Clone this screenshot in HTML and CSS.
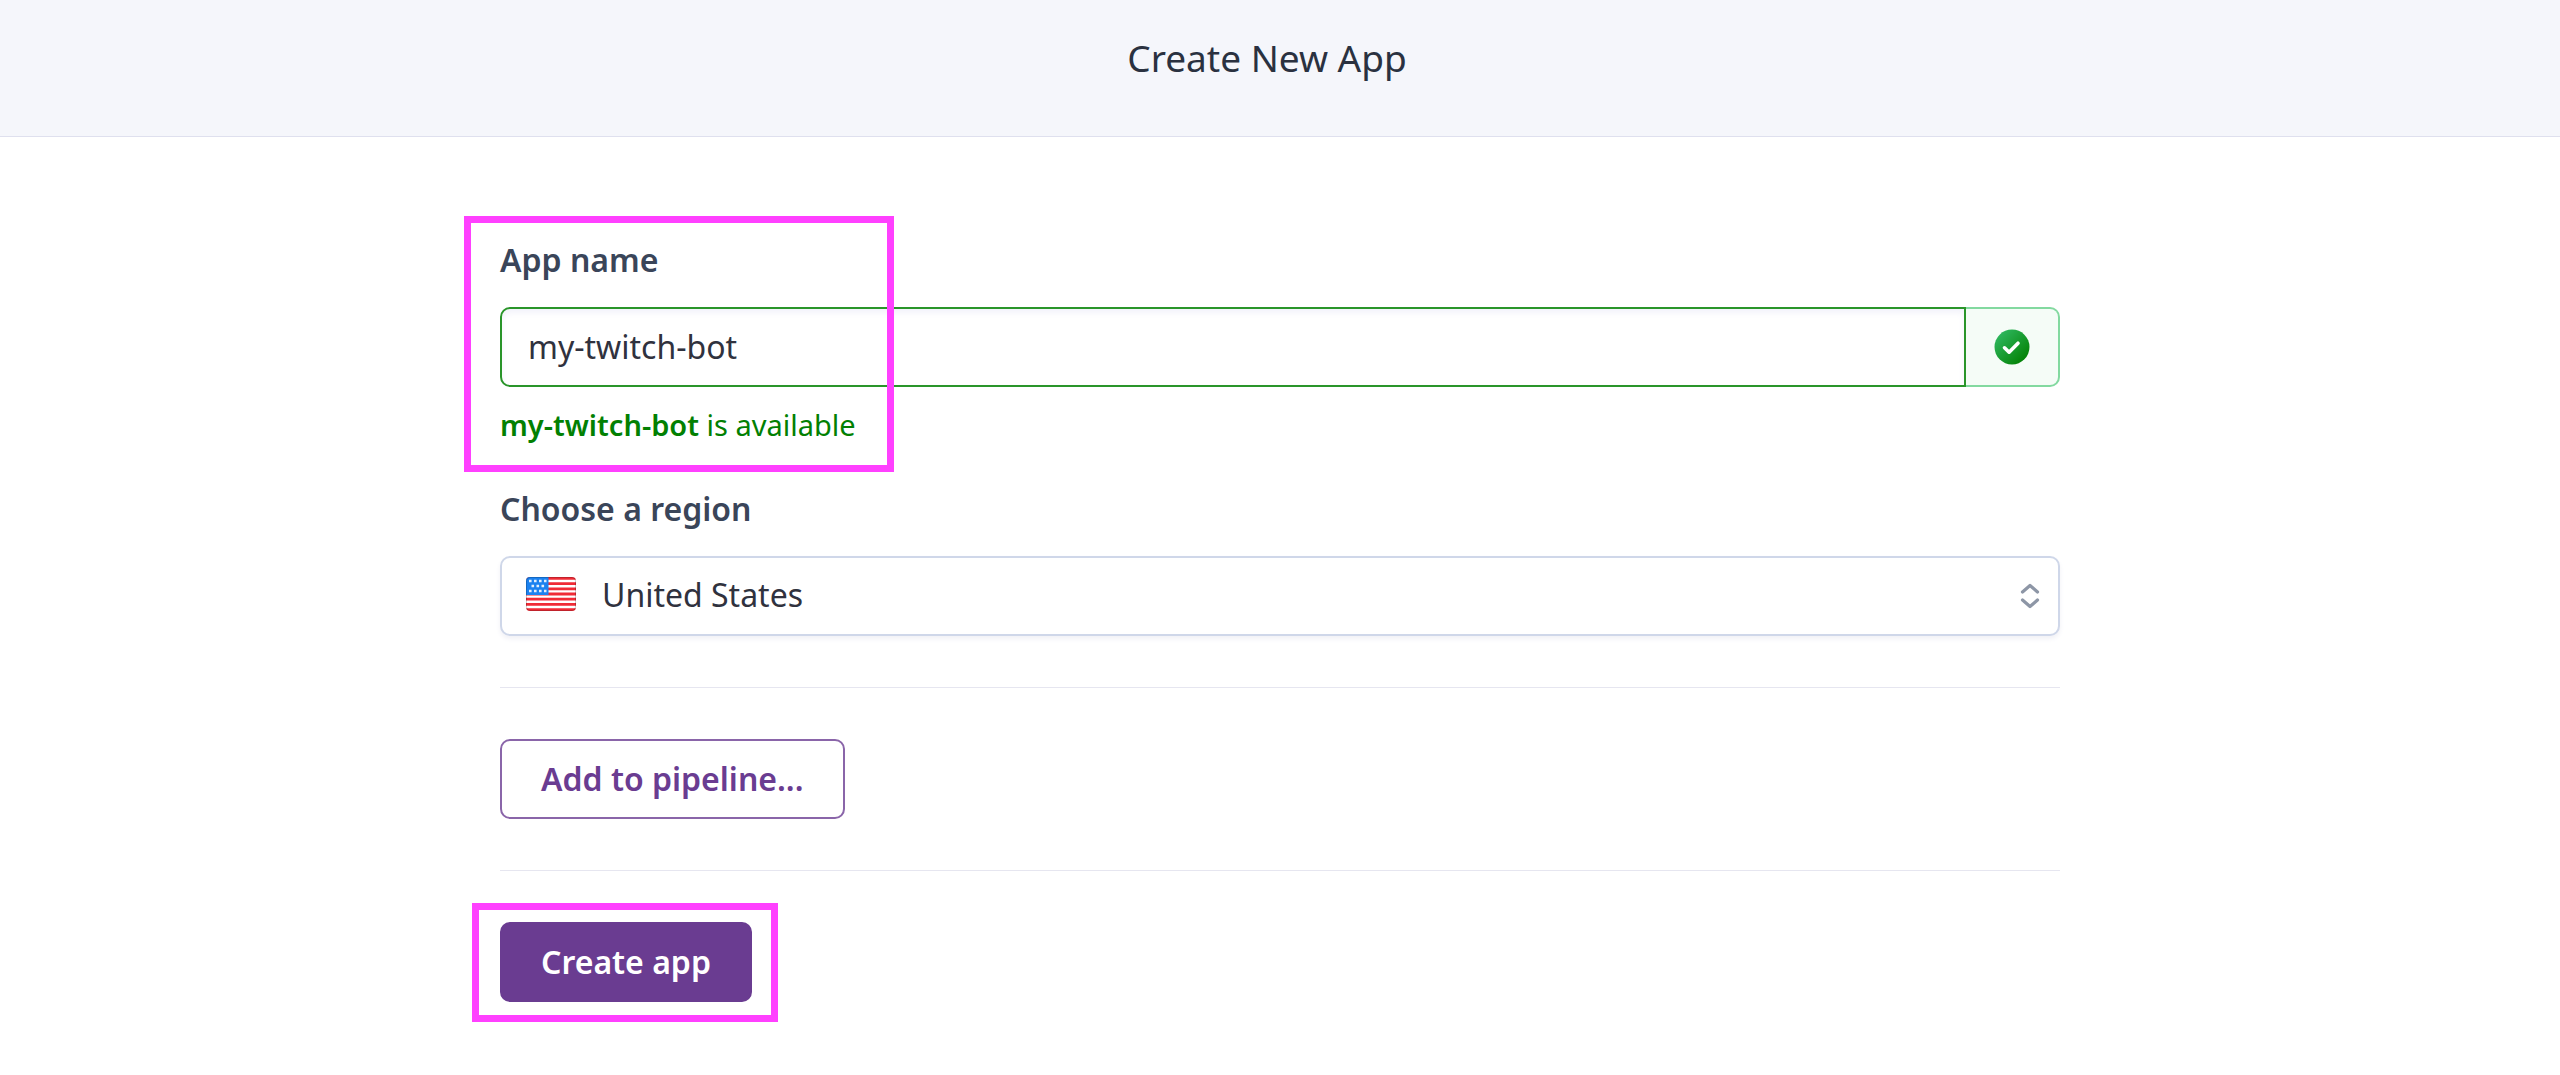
FILE: index.html
```
<!DOCTYPE html>
<html lang="en">
<head>
  <meta charset="UTF-8" />
  <meta name="viewport" content="width=device-width, initial-scale=1" />
  <title>Create New App</title>
  <link rel="stylesheet" href="styles.css">
</head>
<body>

  <header class="page-header">
    <h1>Create New App</h1>
  </header>

  <main>
    <form class="app-form">
      <div class="field name-field">
        <label for="app-name">App name</label>
        <div class="input-group">
          <input type="text" id="app-name" value="my-twitch-bot" aria-describedby="name-status" spellcheck="false">
          <span class="addon">
            <svg width="36" height="36" viewBox="0 0 36 36" aria-hidden="true">
              <defs>
                <linearGradient id="ok" x1="0" y1="0" x2="1" y2="1">
                  <stop offset="0.1" stop-color="#2fb860" />
                  <stop offset="0.9" stop-color="#028002" />
                </linearGradient>
              </defs>
              <circle cx="18" cy="18" r="17.5" fill="url(#ok)" />
              <path d="M10.5 18.8l4.6 4.4 8.9-9" fill="none" stroke="#fff" stroke-width="3.6" stroke-linecap="round" stroke-linejoin="round" />
            </svg>
          </span>
        </div>
        <p class="status" id="name-status"><strong>my-twitch-bot</strong> is available</p>
        <div class="highlight highlight-name"></div>
      </div>

      <div class="field">
        <label for="region">Choose a region</label>
        <div class="select-wrap">
          <select id="region">
            <option value="us">United States</option>
            <option value="eu">Europe</option>
          </select>
          <svg class="flag" width="50" height="34" viewBox="0 0 50 34" aria-hidden="true">
            <defs>
              <clipPath id="flag-shape"><rect width="50" height="34" rx="4" /></clipPath>
            </defs>
            <g clip-path="url(#flag-shape)">
              <rect width="50" height="34" fill="#fff" />
              <path d="M0 1.4h50M0 6.6h50M0 11.8h50M0 17h50M0 22.2h50M0 27.4h50M0 32.6h50" stroke="#f02b36" stroke-width="2.8" />
              <rect width="22.5" height="18" fill="#1b82f0" />
              <path d="M3 4h17.5M5.5 9h14M3 14h17.5" stroke="#e4effb" stroke-width="2.6" stroke-dasharray="2.6 2.4" />
            </g>
            <rect x="0.5" y="0.5" width="49" height="33" rx="3.5" fill="none" stroke="#000" stroke-opacity="0.2" />
          </svg>
          <svg class="chevrons" width="20" height="26" viewBox="0 0 20 26" aria-hidden="true">
            <path d="M2.5 9L10 2.500 17.5 9M2.5 17L10 23.5 17.5 17" fill="none" stroke="#8d96a6" stroke-width="3.2" stroke-linecap="round" stroke-linejoin="round" />
          </svg>
        </div>
      </div>

      <hr>
      <button type="button" class="btn btn-outline">Add to pipeline...</button>
      <hr>
      <div class="submit">
        <button type="submit" class="btn btn-primary">Create app</button>
        <div class="highlight highlight-submit"></div>
      </div>
    </form>
  </main>

</body>
</html>
```
FILE: styles.css
```
* {
  box-sizing: border-box;
  margin: 0;
  padding: 0;
}

body {
  font-family: 'Noto Sans', 'Open Sans', sans-serif;
  font-size: 32px;
  line-height: 40px;
  color: #30323e;
  background: #fff;
}

.page-header {
  padding: 34px 26px 54px 0;
  background: #f5f6fb;
  border-bottom: 1px solid #dfe0ee;
  text-align: center;
}

.page-header h1 {
  font-size: 37px;
  line-height: 48px;
  font-weight: 400;
  color: #2a3140;
}

main {
  padding: 103px 40px 72px;
}

.app-form {
  max-width: 1560px;
  margin: 0 auto;
}

.field {
  position: relative;
  margin-bottom: 44px;
}

.field label {
  display: block;
  margin-bottom: 27px;
  font-weight: 600;
  color: #3a4559;
}

.input-group {
  display: flex;
  height: 80px;
}

input,
select,
.btn {
  font: inherit;
  color: inherit;
  height: 80px;
  border-radius: 10px;
}

.input-group input {
  flex: 1;
  min-width: 0;
  padding: 0 26px 2px;
  border: 2px solid #2a952a;
  border-radius: 10px 0 0 10px;
  box-shadow: inset 0 4px 6px #f3f3fb;
  outline: none;
}

.addon {
  display: flex;
  align-items: center;
  justify-content: center;
  width: 94px;
  background: #f5fcf7;
  border: 2px solid #83d9a0;
  border-left: 0;
  border-radius: 0 10px 10px 0;
}

.status {
  margin-top: 18px;
  font-size: 29px;
  color: #028002;
}

.status strong {
  font-weight: 600;
}

.select-wrap {
  position: relative;
}

select {
  display: block;
  width: 100%;
  padding: 0 80px 2px 100px;
  appearance: none;
  background: #fff;
  border: 2px solid #cfd7e9;
  box-shadow: 0 3px 5px #f1f1f6;
}

.flag,
.chevrons {
  position: absolute;
  top: 0;
  bottom: 0;
  margin: auto 0;
  pointer-events: none;
}

.flag {
  bottom: 4px;
  left: 26px;
}

.chevrons {
  right: 20px;
}

hr {
  border: 0;
  border-top: 1px solid #e6e6f0;
  margin: 51px 0;
}

.btn {
  padding: 0 39px;
  font-weight: 600;
  display: block;
  cursor: pointer;
}

.btn-outline {
  color: #6a3c91;
  background: #fff;
  border: 2px solid #8a65a9;
}

.btn-primary {
  color: #fff;
  background: #6a3c91;
  border: 2px solid #6a3c91;
}

.submit {
  position: relative;
  width: fit-content;
}

/* call-out frames drawn over the form */
.highlight {
  position: absolute;
  border: 7px solid #ff40ff;
  pointer-events: none;
}

.highlight-name {
  top: -24px;
  bottom: -27px;
  left: -36px;
  width: 430px;
}

.highlight-submit {
  top: -19px;
  right: -26px;
  bottom: -20px;
  left: -28px;
}
```
